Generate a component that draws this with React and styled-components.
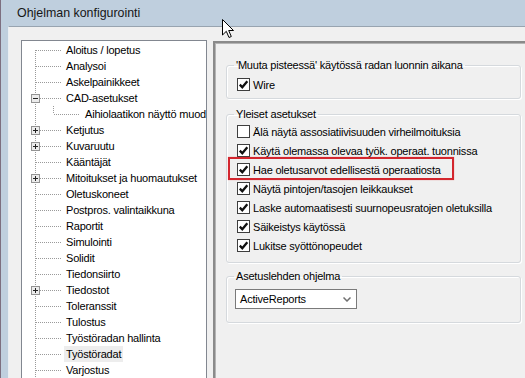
import React from 'react';
import styled, { createGlobalStyle } from 'styled-components';

const Global = createGlobalStyle`
  html, body { margin: 0; padding: 0; overflow: hidden; background: #f0f0f0; }
  body { font-family: "Liberation Sans", Arial, sans-serif; font-size: 11px; letter-spacing: -0.2px; color: #000; }
`;

const Window = styled.div`
  position: relative;
  width: 525px;
  height: 378px;
  box-sizing: border-box;
  display: flex;
  flex-direction: column;
  background: #bfcfde;
  border-left: 1px solid #7d6f80;
  overflow: hidden;
`;

const TitleBar = styled.div`
  flex: none;
  height: 26px;
  display: flex;
  align-items: center;
  padding-left: 16px;
  font-size: 12.4px;
  letter-spacing: 0;
  color: #161616;
`;

const Body = styled.div`
  flex: 1;
  min-height: 0;
  display: flex;
  align-items: stretch;
  margin-left: 7px;
  padding: 13px 0 0 12px;
  background: #f0f0f0;
  border-top: 1px solid #98a4b0;
  border-left: 1px solid #e9eef3;
`;

const Tree = styled.div`
  flex: none;
  width: 186px;
  box-sizing: border-box;
  background: #fff;
  border: 1px solid #828790;
  border-bottom: none;
  padding-top: 1px;
  overflow: hidden;
`;

const TreeRow = styled.div`
  display: flex;
  align-items: center;
  height: 16px;
  white-space: nowrap;
`;

const TreeLabel = styled.span`
  padding: 0 2px;
  line-height: 16px;
  background: ${(p) => (p.$selected ? '#ededed' : 'transparent')};
`;

const Panel = styled.div`
  flex: none;
  width: 330px;
  margin: 1px 0 0 6px;
  padding: 15px 0 0 11px;
  border-top: 2px solid #8a8a8a;
  border-left: 2px solid #8a8a8a;
  box-shadow: inset 1px 1px 0 #b4b4b4;
  background: #f0f0f0;
`;

const Group = styled.fieldset`
  margin: ${(p) => p.$gap || 0}px 0 0 0;
  padding: 0;
  width: 295px;
  min-width: 0;
  box-sizing: border-box;
  border: 1px solid #d5d9dd;
  border-radius: 3px;
  box-shadow: inset 1px 1px 0 #fff, 1px 1px 0 #fff;
`;

const Legend = styled.legend`
  margin-left: 7px;
  padding: 0 2px;
  line-height: 14px;
  font-size: 11px;
  color: #000;
`;

const GroupContent = styled.div`
  padding: ${(p) => p.$pad};
`;

const CheckRow = styled.div`
  position: relative;
  display: flex;
  align-items: center;
  gap: 3px;
  height: 19px;
  width: max-content;
  &::after {
    content: '';
    display: ${(p) => (p.$highlight ? 'block' : 'none')};
    position: absolute;
    left: -9px;
    right: -13px;
    top: -3px;
    bottom: -1px;
    border: 2px solid #d3262e;
    box-shadow: 0 0 1px rgba(211, 38, 46, 0.5);
  }
`;

const Box = styled.span`
  flex: none;
  width: 13px;
  height: 13px;
  box-sizing: border-box;
  border: 1px solid #3e3e3e;
  background: #fff;
  display: flex;
  align-items: center;
  justify-content: center;
`;

const Select = styled.div`
  width: 122px;
  height: 20px;
  box-sizing: border-box;
  border: 1px solid #7a7a7a;
  background: #fff;
  display: flex;
  align-items: center;
  justify-content: space-between;
  padding: 0 5px 0 4px;
`;

const Cursor = styled.svg`
  position: absolute;
  left: 221px;
  top: 19px;
  pointer-events: none;
`;

const dot = { stroke: '#9a9a9a', strokeWidth: 1, strokeDasharray: '1 1', shapeRendering: 'crispEdges' };

function Lines({ level, expander, first }) {
  const w = level === 1 ? 61 : 42;
  return (
    <svg width={w} height="16" style={{ flex: 'none', display: 'block' }}>
      <line x1="13.5" x2="13.5" y1={first ? 8 : 0} y2="16" style={dot} />
      {level === 0 && <line x1={expander ? 18 : 14} x2="39" y1="8.5" y2="8.5" style={dot} />}
      {level === 1 && (
        <>
          <line x1="31.5" x2="31.5" y1="0" y2="8" style={dot} />
          <line x1="32" x2="58" y1="8.5" y2="8.5" style={dot} />
        </>
      )}
      {expander && (
        <>
          <rect x="9.5" y="4.5" width="8" height="8" fill="#ececec" stroke="#939393" shapeRendering="crispEdges" />
          <line x1="11" x2="16" y1="8.5" y2="8.5" stroke="#222" shapeRendering="crispEdges" />
          {expander === 'plus' && <line x1="13.5" x2="13.5" y1="6" y2="11" stroke="#222" shapeRendering="crispEdges" />}
        </>
      )}
    </svg>
  );
}

const items = [
  { label: 'Aloitus / lopetus' },
  { label: 'Analysoi' },
  { label: 'Askelpainikkeet' },
  { label: 'CAD-asetukset', expander: 'minus' },
  { label: 'Aihiolaatikon näyttö muodossa', level: 1 },
  { label: 'Ketjutus', expander: 'plus' },
  { label: 'Kuvaruutu', expander: 'plus' },
  { label: 'Kääntäjät' },
  { label: 'Mitoitukset ja huomautukset', expander: 'plus' },
  { label: 'Oletuskoneet' },
  { label: 'Postpros. valintaikkuna' },
  { label: 'Raportit' },
  { label: 'Simulointi' },
  { label: 'Solidit' },
  { label: 'Tiedonsiirto' },
  { label: 'Tiedostot', expander: 'plus' },
  { label: 'Toleranssit' },
  { label: 'Tulostus' },
  { label: 'Työstöradan hallinta' },
  { label: 'Työstöradat', selected: true },
  { label: 'Varjostus' },
];

function Check({ checked }) {
  return (
    <Box>
      {checked && (
        <svg width="11" height="11" viewBox="0 0 11 11">
          <path d="M1.8 5.6 L4.3 8.2 L9.3 2.2" fill="none" stroke="#111" strokeWidth="2.3" />
        </svg>
      )}
    </Box>
  );
}

function CheckItem({ label, checked = true, highlight }) {
  return (
    <CheckRow $highlight={highlight}>
      <Check checked={checked} />
      <span>{label}</span>
    </CheckRow>
  );
}

export default function App() {
  return (
    <>
      <Global />
      <Window>
        <TitleBar>Ohjelman konfigurointi</TitleBar>
        <Body>
          <Tree>
            {items.map((it, i) => (
              <TreeRow key={it.label}>
                <Lines level={it.level || 0} expander={it.expander} first={i === 0} />
                <TreeLabel $selected={it.selected}>{it.label}</TreeLabel>
              </TreeRow>
            ))}
          </Tree>
          <Panel>
            <Group>
              <Legend>'Muuta pisteessä' käytössä radan luonnin aikana</Legend>
              <GroupContent $pad="3px 0 4px 10px">
                <CheckItem label="Wire" />
              </GroupContent>
            </Group>
            <Group $gap={8}>
              <Legend>Yleiset asetukset</Legend>
              <GroupContent $pad="1px 0 7px 10px">
                <CheckItem label="Älä näytä assosiatiivisuuden virheilmoituksia" checked={false} />
                <CheckItem label="Käytä olemassa olevaa työk. operaat. tuonnissa" />
                <CheckItem label="Hae oletusarvot edellisestä operaatiosta" highlight />
                <CheckItem label="Näytä pintojen/tasojen leikkaukset" />
                <CheckItem label="Laske automaatisesti suurnopeusratojen oletuksilla" />
                <CheckItem label="Säikeistys käytössä" />
                <CheckItem label="Lukitse syöttönopeudet" />
              </GroupContent>
            </Group>
            <Group $gap={6}>
              <Legend>Asetuslehden ohjelma</Legend>
              <GroupContent $pad="6px 0 13px 8px">
                <Select>
                  <span>ActiveReports</span>
                  <svg width="8" height="5" viewBox="0 0 8 5">
                    <path d="M0.5 0.5 L4 4 L7.5 0.5" fill="none" stroke="#707070" strokeWidth="1.5" />
                  </svg>
                </Select>
              </GroupContent>
            </Group>
          </Panel>
        </Body>
        <Cursor width="13" height="20" viewBox="0 0 13 20">
          <path d="M0.5 0.5 L0.5 16 L4.3 12.3 L7 18.5 L9.3 17.5 L6.7 11.5 L11.5 11.5 Z" fill="#fff" stroke="#000" strokeWidth="1" strokeLinejoin="miter" />
        </Cursor>
      </Window>
    </>
  );
}
